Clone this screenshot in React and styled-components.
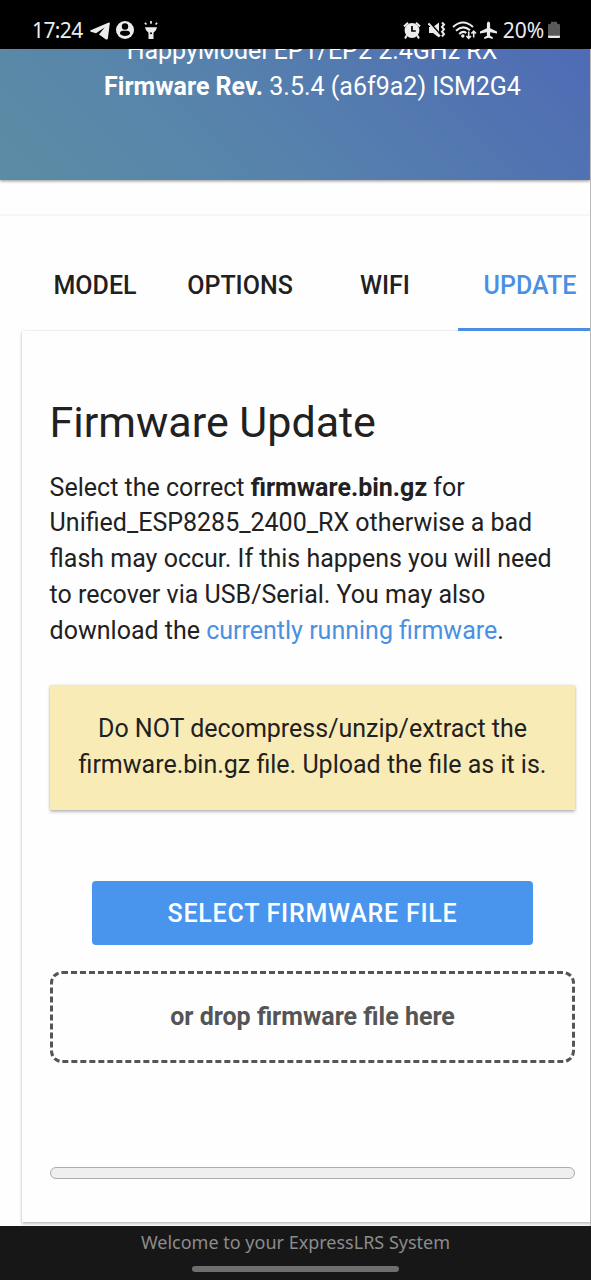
import React from "react";
import styled, { createGlobalStyle } from "styled-components";

const GlobalStyle = createGlobalStyle`
  * { box-sizing: border-box; }
  body { margin: 0; background: #fff; }
  p, h1 { margin: 0; }
`;

const Screen = styled.div`
  width: 591px;
  height: 1280px;
  display: flex;
  flex-direction: column;
  overflow: hidden;
  background: #fefefe;
  color: #212121;
  font: 400 25px/35.8px Roboto, sans-serif;
`;

const StatusBar = styled.header`
  height: 49px;
  flex: none;
  padding: 12px 31px 0 32px;
  display: flex;
  align-items: flex-start;
  justify-content: space-between;
  background: #000;
  color: #ececec;
`;

const StatusGroup = styled.div`
  display: flex;
  align-items: center;
  height: 36px;
`;

const StatusText = styled.span`
  font: 400 21px/36px "Noto Sans", sans-serif;
  letter-spacing: ${(p) => p.$spacing || "0"};
  margin-left: ${(p) => p.$gap || 0}px;
`;

const StatusIcon = styled.svg`
  width: ${(p) => p.$w}px;
  height: 22px;
  margin-left: ${(p) => p.$gap || 0}px;
  flex: none;
  fill: #ececec;
`;

const Page = styled.div`
  flex: none;
  height: 1177px;
  display: flex;
  flex-direction: column;
  overflow: hidden;
  border-right: 1px solid #b9b9b9;
`;

const Banner = styled.section`
  height: 131px;
  flex: none;
  overflow: hidden;
  display: flex;
  flex-direction: column;
  justify-content: flex-start;
  padding-left: 35px;
  text-align: center;
  color: #fff;
  white-space: nowrap;
  background: linear-gradient(45deg, #5c8ca4 0%, #5783ac 40%, #4e6bb5 100%);
  box-shadow: 0 1px 3px rgba(0, 0, 0, 0.45);
`;

const BannerLine = styled.p`
  margin-top: ${(p) => p.$top || 0}px;
  padding-right: ${(p) => p.$right || 0}px;
`;

const Content = styled.main`
  flex: none;
  height: 1012px;
  margin-top: 34px;
  border-top: 2px solid #f7f7f7;
  padding: 27px 0 0 22px;
`;

const Tabs = styled.nav`
  height: 88px;
  display: grid;
  grid-template-columns: 146px 144px 146px 144px;
`;

const Tab = styled.a`
  display: flex;
  align-items: center;
  justify-content: center;
  padding-top: 1px;
  font-weight: 500;
  color: ${(p) => (p.$active ? "#4a90e2" : "#212121")};
  border-bottom: 3px solid ${(p) => (p.$active ? "#4a90e2" : "transparent")};
`;

const Panel = styled.section`
  height: 891px;
  width: 580px;
  padding: 68px 0 0 28px;
  box-shadow: 0 2px 3px rgba(0, 0, 0, 0.22), 0 0 2px rgba(0, 0, 0, 0.14);
`;

const PanelBody = styled.div`
  width: 525px;
  display: flex;
  flex-direction: column;
`;

const Title = styled.h1`
  font-size: 43px;
  font-weight: 400;
  line-height: 46px;
  text-indent: -0.5px;
  white-space: nowrap;
`;

const Copy = styled.div`
  margin-top: 24.6px;
  text-indent: -0.4px;
  white-space: nowrap;
`;

const Line = styled.p`
  letter-spacing: 0;
`;

const Link = styled.a`
  color: #4a90e2;
`;

const Notice = styled.div`
  height: 125px;
  margin-top: 36px;
  padding-top: 26.6px;
  text-align: center;
  white-space: nowrap;
  background: #f8ebb6;
  box-shadow: 0 2px 3px rgba(0, 0, 0, 0.25), 0 0 2px rgba(0, 0, 0, 0.12);
`;

const SelectButton = styled.button`
  align-self: center;
  width: 441px;
  height: 64px;
  margin-top: 71.4px;
  padding: 2px 0 0;
  border: 0;
  border-radius: 4px;
  background: #4995ee;
  color: #fff;
  font: 500 25px/62px Roboto, sans-serif;
  letter-spacing: 0.75px;
  white-space: nowrap;
`;

const DropZone = styled.div`
  height: 92px;
  margin-top: 26px;
  display: flex;
  align-items: center;
  justify-content: center;
  border: 3px dashed #555;
  border-radius: 12px;
  color: #555;
  font-weight: 700;
  white-space: nowrap;
`;

const Progress = styled.div`
  height: 12px;
  margin-top: 104px;
  border: 1px solid #acacac;
  border-radius: 6px;
  background: #efefef;
`;

const Footer = styled.footer`
  flex: 1;
  display: flex;
  flex-direction: column;
  align-items: center;
  background: #171717;
  color: #8c8c8c;
  font: 400 18px/32px "Noto Sans", sans-serif;
  white-space: nowrap;
`;

const HomeBar = styled.div`
  width: 207px;
  height: 6px;
  margin-top: 8px;
  border-radius: 3px;
  background: #6e6e6e;
`;

export default function App() {
  return (
    <Screen>
      <GlobalStyle />
      <StatusBar>
        <StatusGroup>
          <StatusText $spacing="-0.6px">17:24</StatusText>
          <StatusIcon $w={20} $gap={7} viewBox="0 0 20 22">
            <path d="M18.800 3.500.7 11.200c-.8.5-.6 1.200.1 1.500l5.200 1.500L14.500 8.500l-5.500 7 6.700 4.700c1.200.7 2 .2 2.200-.9L19.800 4.500c.1-1-.3-1.300-1-1Z" />
          </StatusIcon>
          <StatusIcon $w={18} $gap={6} viewBox="0 0 18 22">
            <circle cx="9" cy="11" r="9" />
            <circle cx="9" cy="7.500" r="3.200" fill="#000" />
            <path d="M4 15v-.5q0-2.700 3-2.700h4q3 0 3 2.700v.5q-2 2-5 2t-5-2Z" fill="#000" />
          </StatusIcon>
          <StatusIcon $w={14} $gap={10} viewBox="0 0 14 22">
            <path d="M1 8.200h12q-.4 3.700-3.500 5.500V20h-5v-6.300Q1.400 11.900 1 8.200Z" />
            <path d="M7 2v2.700M.9 3.800l1.500 1.700M13.100 3.800l-1.500 1.700" stroke="#ececec" strokeWidth="1.700" />
            <circle cx="7" cy="14.200" r="1" fill="#000" />
          </StatusIcon>
        </StatusGroup>
        <StatusGroup>
          <StatusIcon $w={18} viewBox="0 0 18 22">
            <circle cx="9" cy="11.500" r="7.400" />
            <path d="m1 7.500 4-3.800M17 7.500l-4-3.800M4 16l-2 3.500M14 16l2 3.500" stroke="#ececec" strokeWidth="2" />
            <path d="M9 7v5h3.800" fill="none" stroke="#000" strokeWidth="1.700" />
          </StatusIcon>
          <StatusIcon $w={18} $gap={7} viewBox="0 0 18 22">
            <path d="M1 8h4l6-4.500v15L5 14H1Z" />
            <path d="m1 2.800 11.500 13" stroke="#000" strokeWidth="2" />
            <path d="m.5 4.300 11.500 13" stroke="#ececec" strokeWidth="2" />
            <path d="m14 3.500 2 2-2 2.400 2 2.400-2 2.400 2 2.400-2 2.400" fill="none" stroke="#ececec" strokeWidth="2" />
          </StatusIcon>
          <StatusIcon $w={25} $gap={6} viewBox="0 0 25 22">
            <g fill="none" stroke="#ececec" strokeWidth="2">
              <path d="M1 8Q11 -1 21 8" />
              <path d="M4 11.700Q11 5.300 18 11.200" />
              <path d="M7.200 15Q11 11.300 14.300 14" />
            </g>
            <circle cx="10.800" cy="17" r="1.700" />
            <path d="M16.700 12.500v6.500m-2.300-2 2.300 2.300 2.300-2.300M21.700 18.500v-6m-2.300 2 2.300-2.300 2.300 2.300" fill="none" stroke="#ececec" strokeWidth="1.600" />
          </StatusIcon>
          <StatusIcon $w={17} $gap={3} viewBox="0 0 17 22">
            <path d="M6.900 5q0-2.500 1.600-2.500T10.100 5v4.200l6.900 3.300v2l-6.900-1.300v3.500l2.700 1.600v1.600L8.500 18.800l-4.300 1.100v-1.600l2.700-1.600v-3.500L0 14.500v-2l6.900-3.300Z" />
          </StatusIcon>
          <StatusText $gap={6} $spacing="-0.1px">20%</StatusText>
          <StatusIcon $w={12} $gap={4} viewBox="0 0 12 22">
            <path d="M3 2.800h6v2h1.500q1.500 0 1.500 1.500V19H0V6.300q0-1.500 1.500-1.500H3Z" fill="#595959" />
            <path d="M0 16.800h12v.7q0 1.500-1.500 1.500h-9Q0 19 0 17.500Z" />
          </StatusIcon>
        </StatusGroup>
      </StatusBar>
      <Page>
        <Banner>
          <BannerLine $top={-16} $right={1}>HappyModel EP1/EP2 2.4GHz RX</BannerLine>
          <BannerLine><b>Firmware Rev.</b> 3.5.4 (a6f9a2) ISM2G4</BannerLine>
        </Banner>
        <Content>
          <Tabs>
            <Tab>MODEL</Tab>
            <Tab>OPTIONS</Tab>
            <Tab>WIFI</Tab>
            <Tab $active>UPDATE</Tab>
          </Tabs>
          <Panel>
            <PanelBody>
              <Title>Firmware Update</Title>
              <Copy>
                <Line>Select the correct <b>firmware.bin.gz</b> for</Line>
                <Line>Unified_ESP8285_2400_RX otherwise a bad</Line>
                <Line>flash may occur. If this happens you will need</Line>
                <Line>to recover via USB/Serial. You may also</Line>
                <Line>download the <Link>currently running firmware</Link>.</Line>
              </Copy>
              <Notice>
                <Line>Do NOT decompress/unzip/extract the</Line>
                <Line>firmware.bin.gz file. Upload the file as it is.</Line>
              </Notice>
              <SelectButton>SELECT FIRMWARE FILE</SelectButton>
              <DropZone>or drop firmware file here</DropZone>
              <Progress />
            </PanelBody>
          </Panel>
        </Content>
      </Page>
      <Footer>
        <span>Welcome to your ExpressLRS System</span>
        <HomeBar />
      </Footer>
    </Screen>
  );
}
